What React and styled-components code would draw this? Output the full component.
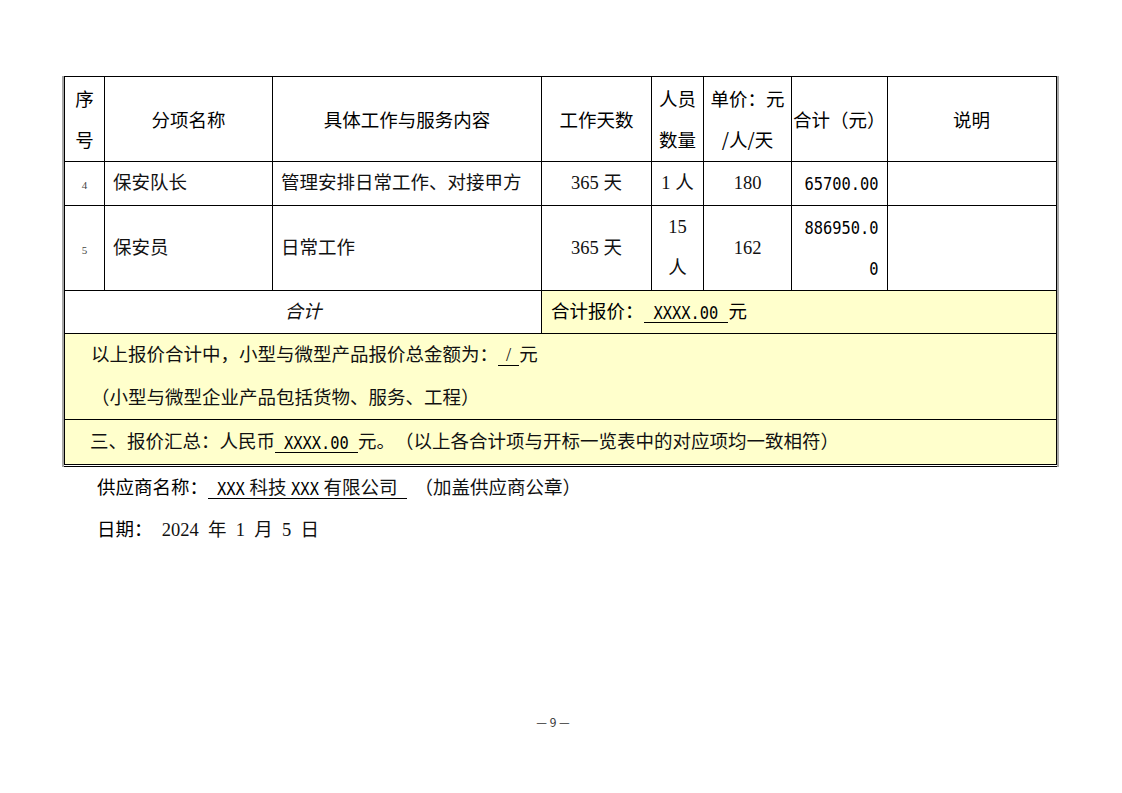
import React from 'react';
import styled, { createGlobalStyle } from 'styled-components';

const GlobalStyle = createGlobalStyle`
  html, body {
    margin: 0;
    padding: 0;
    background: #fff;
  }
  body {
    font-family: "Liberation Serif", "Noto Sans CJK SC", serif;
    color: #000;
    text-spacing-trim: space-all;
  }
`;

const Page = styled.div`
  width: 1122px;
  height: 793px;
  box-sizing: border-box;
  padding: 76px 0 0 62px;
  display: flex;
  flex-direction: column;
`;

const TableFrame = styled.div`
  width: fit-content;
  border-left: 2px solid #a6a6a6;
  border-right: 2px solid #a6a6a6;
`;

const Table = styled.table`
  border-collapse: collapse;
  table-layout: fixed;
  font-size: 18.5px;
`;

const Row = styled.tr`
  height: ${(p) => p.h}px;
`;

const Cell = styled.td`
  border: 1px solid #000;
  border-bottom: ${(p) => (p.last ? '3px double #000' : '1px solid #000')};
  padding: 0 ${(p) => (p.pad !== undefined ? p.pad : 8)}px;
  line-height: 41px;
  vertical-align: middle;
  text-align: ${(p) => p.align || 'left'};
  background: ${(p) => (p.yellow ? '#ffffcc' : '#fff')};
  white-space: nowrap;
  overflow: hidden;
  color: #111;
`;

const HeadCell = styled(Cell)`
  font-family: "Noto Sans CJK SC", sans-serif;
  text-align: ${(p) => p.align || 'center'};
  color: #000;
`;

const SeqNo = styled.span`
  font-size: 11px;
  line-height: 1;
  color: #444;
`;

const Mono = styled.span`
  display: inline-block;
  font-family: "DejaVu Sans Mono", "Liberation Mono", "Noto Sans CJK SC", monospace;
  font-size: 15.4px;
  line-height: 1;
  transform: scaleY(1.18);
  color: #000;
`;

const Sans = styled.span`
  font-family: "Noto Sans CJK SC", sans-serif;
  line-height: 1;
  color: #000;
`;

const Italic = styled.span`
  font-family: "Noto Sans CJK SC", sans-serif;
  font-style: italic;
  line-height: 1;
`;

const Blank = styled.span`
  padding: 0 ${(p) => p.pad || 10}px;
  border-bottom: 1px solid #000;
  line-height: 1;
`;

const NoteLine = styled.div`
  line-height: 42.5px;
`;

const Signature = styled.div`
  margin-left: 35px;
  font-size: 18.5px;
  line-height: 42px;
  color: #111;
`;

const Stamp = styled.span`
  margin-left: 8px;
`;

const Footer = styled.div`
  margin-top: auto;
  margin-left: -62px;
  padding: 0 16px 63px 0;
  text-align: center;
  font-family: "Noto Sans CJK SC", sans-serif;
  font-size: 12px;
  color: #333;
`;

const cols = [40, 168, 269, 110, 52, 88, 93, 169];

export default function App() {
  return (
    <>
      <GlobalStyle />
      <Page>
        <TableFrame>
          <Table>
            <colgroup>
              {cols.map((w, i) => (
                <col key={i} style={{ width: w }} />
              ))}
            </colgroup>
            <tbody>
              <Row h={85}>
                <HeadCell pad={0}>序<br />号</HeadCell>
                <HeadCell>分项名称</HeadCell>
                <HeadCell>具体工作与服务内容</HeadCell>
                <HeadCell>工作天数</HeadCell>
                <HeadCell pad={0}>人员<br />数量</HeadCell>
                <HeadCell pad={0}>单价：元<br />/人/天</HeadCell>
                <HeadCell pad={1} align="left">合计（元）</HeadCell>
                <HeadCell>说明</HeadCell>
              </Row>
              <Row h={44}>
                <Cell align="center" pad={0}><SeqNo>4</SeqNo></Cell>
                <Cell>保安队长</Cell>
                <Cell>管理安排日常工作、对接甲方</Cell>
                <Cell align="center">365 天</Cell>
                <Cell align="center" pad={0}>1 人</Cell>
                <Cell align="center">180</Cell>
                <Cell align="right"><Mono>65700.00</Mono></Cell>
                <Cell />
              </Row>
              <Row h={85}>
                <Cell align="center" pad={0}><SeqNo>5</SeqNo></Cell>
                <Cell>保安员</Cell>
                <Cell>日常工作</Cell>
                <Cell align="center">365 天</Cell>
                <Cell align="center" pad={0}>15<br />人</Cell>
                <Cell align="center">162</Cell>
                <Cell align="right" pad={8}>
                  <Mono>886950.0</Mono>
                  <br />
                  <Mono>0</Mono>
                </Cell>
                <Cell />
              </Row>
              <Row h={43}>
                <Cell colSpan={3} align="center"><Italic>合计</Italic></Cell>
                <Cell colSpan={5} yellow pad={9}>
                  <Sans>合计报价：</Sans>
                  <Blank><Mono>XXXX.00</Mono></Blank>
                  <Sans>元</Sans>
                </Cell>
              </Row>
              <Row h={86}>
                <Cell colSpan={8} yellow pad={26}>
                  <NoteLine>
                    以上报价合计中，小型与微型产品报价总金额为：<Blank pad={8}>/</Blank>元
                  </NoteLine>
                  <NoteLine>（小型与微型企业产品包括货物、服务、工程）</NoteLine>
                </Cell>
              </Row>
              <Row h={46}>
                <Cell colSpan={8} yellow pad={25} last>
                  三、报价汇总：人民币<Blank pad={9}><Mono>XXXX.00</Mono></Blank>元。（以上各合计项与开标一览表中的对应项均一致相符）
                </Cell>
              </Row>
            </tbody>
          </Table>
        </TableFrame>

        <Signature>
          <div>
            <Sans>供应商名称：</Sans>
            <Blank pad={9}>
              <Mono>XXX</Mono> 科技 <Mono>XXX</Mono> 有限公司
            </Blank>
            <Stamp>（加盖供应商公章）</Stamp>
          </div>
          <div>
            <Sans>日期：</Sans>{'\u2002'}2024{'\u2002'}年{'\u2002'}1{'\u2002'}月{'\u2002'}5{'\u2002'}日
          </div>
        </Signature>

        <Footer>— 9 —</Footer>
      </Page>
    </>
  );
}
